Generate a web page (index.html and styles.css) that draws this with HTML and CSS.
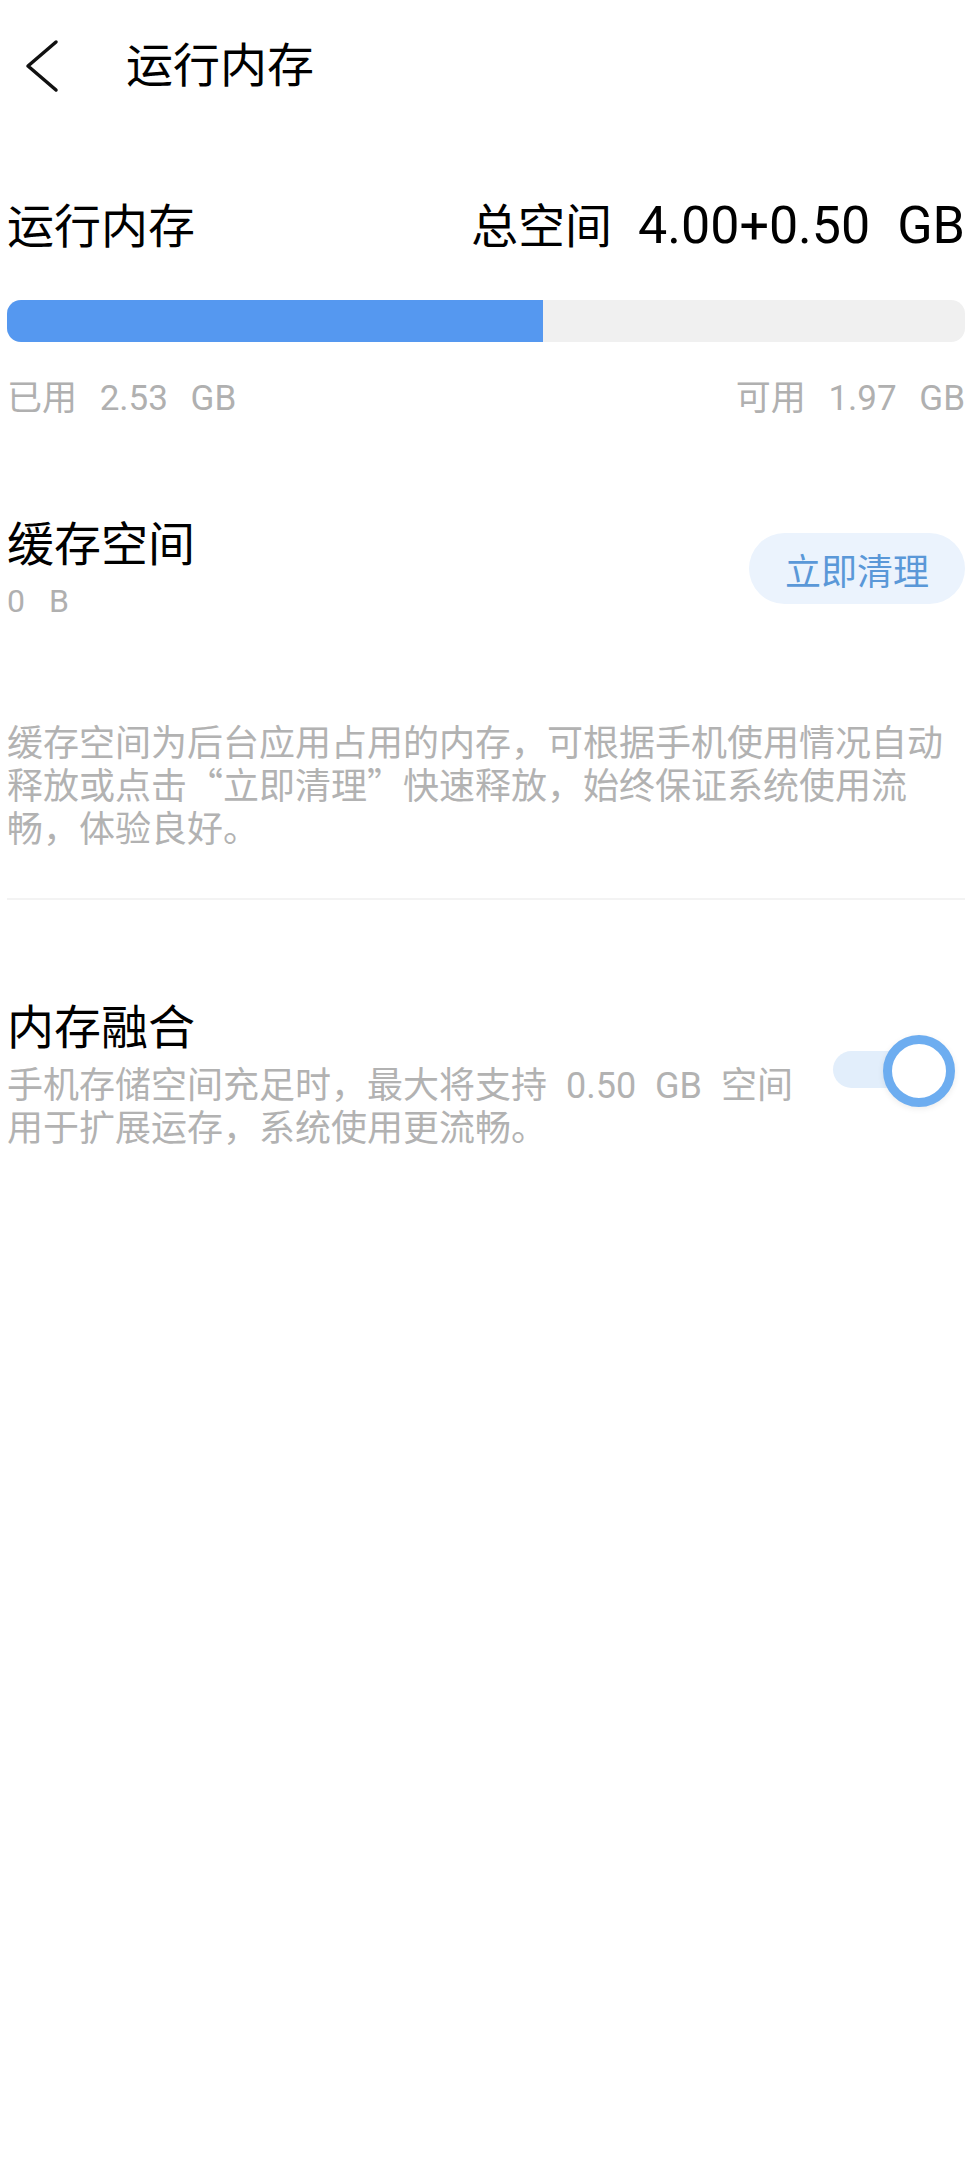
FILE: index.html
```html
<!DOCTYPE html>
<html lang="zh-CN">
<head>
    <meta charset="UTF-8">
    <meta name="viewport" content="width=device-width, initial-scale=1.0">
    <title>运行内存</title>
    <link rel="stylesheet" href="styles.css">
</head>
<body>
    <div class="page">
        <header class="topbar">
            <svg class="back" width="40" height="56" viewBox="0 0 40 56">
                <path d="M34 4 L6 28 L34 52" fill="none" stroke="#111" stroke-width="3.5" stroke-linecap="round" stroke-linejoin="round"/>
            </svg>
            <h1 class="title">运行内存</h1>
        </header>

        <!-- 运行内存 -->
        <section class="ram">
            <div class="ram-head">
                <span class="label">运行内存</span>
                <span class="total">总空间<span class="total-num">4.00+0.50 GB</span></span>
            </div>
            <div class="bar">
                <div class="bar-fill" style="width: 56%"></div>
            </div>
            <div class="ram-stats">
                <span>已用 2.53 GB</span>
                <span>可用 1.97 GB</span>
            </div>
        </section>

        <!-- 缓存空间 -->
        <section class="cache">
            <div class="cache-row">
                <div>
                    <div class="label">缓存空间</div>
                    <div class="cache-size">0 B</div>
                </div>
                <button class="clean-btn">立即清理</button>
            </div>
            <p class="desc cache-desc">缓存空间为后台应用占用的内存，可根据手机使用情况自动释放或点击“立即清理”快速释放，始终保证系统使用流畅，体验良好。</p>
        </section>

        <div class="divider"></div>

        <!-- 内存融合 -->
        <section class="fusion">
            <div class="fusion-text">
                <div class="label">内存融合</div>
                <p class="desc fusion-desc">手机存储空间充足时，最大将支持 0.50 GB 空间用于扩展运存，系统使用更流畅。</p>
            </div>
            <div class="switch">
                <div class="switch-track"></div>
                <div class="switch-knob"></div>
            </div>
        </section>
    </div>
</body>
</html>
```

FILE: styles.css
```css
body {
    margin: 0;
    background: #fff;
    color: #000;
    font-family: Roboto, "Noto Sans CJK SC", sans-serif;
}
.page {
    padding: 0 7px;
}
.topbar {
    height: 132px;
    display: flex;
    align-items: center;
}
.back {
    margin-left: 15px;
    flex-shrink: 0;
}
.title {
    margin: 0 0 0 64px;
    font-size: 47px;
    font-weight: 400;
    line-height: 56px;
}
.label {
    font-size: 47px;
    line-height: 56px;
}
.ram-head {
    margin-top: 66px;
    display: flex;
    justify-content: space-between;
    align-items: baseline;
}
.total {
    font-size: 47px;
    line-height: 56px;
}
.total-num {
    font-size: 52px;
    margin-left: 26px;
    word-spacing: 14px;
}
.bar {
    margin-top: 45px;
    height: 42px;
    border-radius: 14px;
    background: #f0f0f0;
    overflow: hidden;
}
.bar-fill {
    height: 100%;
    background: #5598f0;
}
.ram-stats {
    margin-top: 36px;
    display: flex;
    justify-content: space-between;
    font-size: 35px;
    line-height: 42px;
    color: #b0b0b0;
    word-spacing: 14px;
}
.cache {
    margin-top: 97px;
}
.cache-row {
    display: flex;
    justify-content: space-between;
    align-items: flex-start;
}
.cache-size {
    margin-top: 8px;
    font-size: 32px;
    line-height: 40px;
    color: #b0b0b0;
    word-spacing: 16px;
}
.clean-btn {
    margin-top: 16px;
    width: 216px;
    height: 71px;
    border: none;
    border-radius: 36px;
    background: #ebf3fd;
    color: #5a98d8;
    font-family: inherit;
    font-size: 36px;
    padding: 0;
}
.desc {
    margin: 0;
    font-size: 36px;
    line-height: 43px;
    color: #b2b2b2;
    word-spacing: 10px;
}
.cache-desc {
    margin-top: 98px;
    font-family: "Noto Sans CJK SC", sans-serif;
}
.divider {
    margin-top: 50px;
    height: 2px;
    background: #f3f3f3;
}
.fusion {
    margin-top: 100px;
    display: flex;
    justify-content: space-between;
    align-items: flex-start;
}
.fusion-text {
    width: 810px;
}
.fusion-desc {
    margin-top: 9px;
}
.switch {
    position: relative;
    width: 122px;
    height: 74px;
    margin: 35px 10px 0 0;
}
.switch-track {
    position: absolute;
    left: 0;
    top: 16px;
    width: 100px;
    height: 37px;
    border-radius: 19px;
    background: #e2eefb;
}
.switch-knob {
    position: absolute;
    right: 0;
    top: 0;
    width: 54px;
    height: 54px;
    border: 9px solid #6dadf0;
    border-radius: 50%;
    background: #fff;
    box-shadow: 0 2px 6px rgba(0, 0, 0, 0.08);
}
```
